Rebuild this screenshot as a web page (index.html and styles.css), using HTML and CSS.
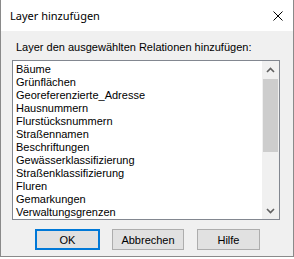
FILE: index.html
```html
<!DOCTYPE html>
<html lang="de">
<head>
  <meta charset="UTF-8">
  <title>Layer hinzufügen</title>
  <link rel="stylesheet" href="styles.css">
</head>
<body>

  <div class="window">
    <div class="titlebar">
      <span class="title">Layer hinzufügen</span>
      <svg class="close" width="10" height="10" viewBox="0 0 10 10">
        <path d="M0.5 0.5 L9.5 9.5 M9.5 0.5 L0.5 9.5" stroke="#000" stroke-width="1" fill="none"/>
      </svg>
    </div>

    <div class="content">
      <div class="label">Layer den ausgewählten Relationen hinzufügen:</div>

      <div class="listbox">
        <ul class="items">
          <li>Bäume</li>
          <li>Grünflächen</li>
          <li>Georeferenzierte_Adresse</li>
          <li>Hausnummern</li>
          <li>Flurstücksnummern</li>
          <li>Straßennamen</li>
          <li>Beschriftungen</li>
          <li>Gewässerklassifizierung</li>
          <li>Straßenklassifizierung</li>
          <li>Fluren</li>
          <li>Gemarkungen</li>
          <li>Verwaltungsgrenzen</li>
        </ul>
        <div class="scrollbar">
          <div class="arrow">
            <svg width="9" height="6" viewBox="0 0 9 6">
              <path d="M1 5 L4.5 1.5 L8 5" stroke="#606060" stroke-width="1.6" fill="none"/>
            </svg>
          </div>
          <div class="track">
            <div class="thumb"></div>
          </div>
          <div class="arrow">
            <svg width="9" height="6" viewBox="0 0 9 6">
              <path d="M1 1 L4.5 4.5 L8 1" stroke="#606060" stroke-width="1.6" fill="none"/>
            </svg>
          </div>
        </div>
      </div>

      <div class="buttons">
        <button class="btn btn-default btn-ok">OK</button>
        <button class="btn btn-cancel">Abbrechen</button>
        <button class="btn btn-help">Hilfe</button>
      </div>
    </div>
  </div>

</body>
</html>
```

FILE: styles.css
```css
body {
  margin: 0;
  padding: 0;
  background: #fff;
  font-family: "Liberation Sans", Arial, sans-serif;
  font-size: 11px;
  color: #000;
  overflow: hidden;
}

.window {
  box-sizing: border-box;
  width: 294px;
  height: 257px;
  border: 1px solid #8a8a8a;
  border-top: 0;
  background: #f0f0f0;
  display: flex;
  flex-direction: column;
}

.titlebar {
  height: 31px;
  flex: none;
  background: #fff;
  display: flex;
  align-items: center;
  justify-content: space-between;
  padding: 0 10px 0 9px;
}

.title {
  font-family: "Noto Sans", sans-serif;
  font-size: 11px;
  color: #000;
}

.close {
  display: block;
}

.content {
  padding: 10px 0 0 11px;
}

.label {
  line-height: 13px;
  padding-left: 4px;
  margin-bottom: 6px;
}

.listbox {
  box-sizing: border-box;
  width: 268px;
  height: 160px;
  border: 1px solid #828790;
  background: #fff;
  display: flex;
}

.items {
  list-style: none;
  margin: 0;
  padding: 2px 0 0 3px;
  flex: 1;
}

.items li {
  line-height: 13px;
  white-space: nowrap;
}

.scrollbar {
  width: 17px;
  background: #f0f0f0;
  display: flex;
  flex-direction: column;
}

.arrow {
  height: 17px;
  display: flex;
  align-items: center;
  justify-content: center;
}

.track {
  flex: 1;
  padding-top: 1px;
}

.thumb {
  height: 73px;
  margin: 0 1px;
  background: #cdcdcd;
}

.buttons {
  display: flex;
  margin-top: 9px;
  padding-left: 23px;
}

.btn {
  box-sizing: border-box;
  height: 21px;
  padding: 0;
  font-family: "Liberation Sans", Arial, sans-serif;
  font-size: 11px;
  color: #000;
  background: #e1e1e1;
  border: 1px solid #adadad;
}

.btn-default {
  border: 2px solid #0078d7;
}

.btn-ok {
  width: 65px;
}

.btn-cancel {
  width: 72px;
  margin-left: 12px;
}

.btn-help {
  width: 63px;
  margin-left: 13px;
}
```
